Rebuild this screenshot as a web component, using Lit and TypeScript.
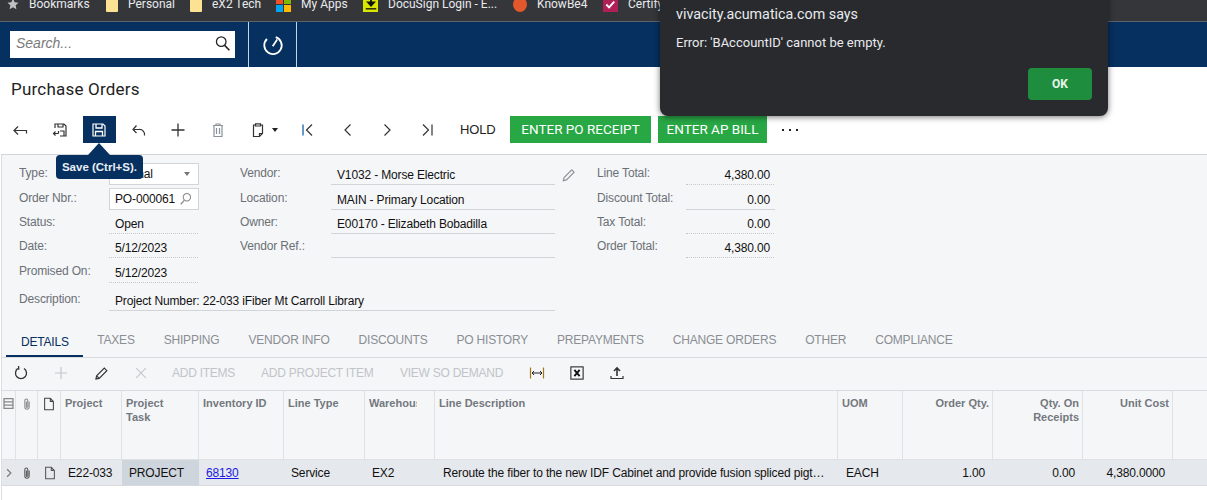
import { LitElement, html, css, svg } from "lit";
import { customElement } from "lit/decorators.js";

const ic = (size: number, body: unknown, cls = "") =>
  html`<svg class="ic ${cls}" width=${size} height=${size} viewBox="0 0 16 16" fill="none" stroke="currentColor" stroke-width="1.2">${body}</svg>`;

const floppy = svg`<path d="M2 2h10l2 2v10H2z"/><path d="M5 2v4h6V2M4.500 14V9.500h7V14" stroke-width="1.300"/>`;
const clip = svg`<path d="M10.500 5v6.500a2.500 2.500 0 0 1-5 0V4a1.700 1.700 0 0 1 3.400 0v7a.8.8 0 0 1-1.600 0V5"/>`;
const doc = svg`<path d="M3 1.500h6.500l3.500 3.500v9.500H3zM9.500 1.500V5H13"/>`;

const tabs = ["DETAILS", "TAXES", "SHIPPING", "VENDOR INFO", "DISCOUNTS", "PO HISTORY", "PREPAYMENTS", "CHANGE ORDERS", "OTHER", "COMPLIANCE"];

@customElement("app-root")
export class AppRoot extends LitElement {
  static styles = css`
    :host { display: block; position: relative; height: 500px; width: 1207px; overflow: hidden; background: #fff; font-family: "Liberation Sans", Arial, sans-serif; font-size: 12px; letter-spacing: -.15px; color: #111; }
    .ic { display: block; flex: none; }

    .bookmarks { height: 21px; background: #35363a; border-bottom: 1px solid #5f6368; overflow: hidden; color: #e8eaed; font-family: Roboto, sans-serif; font-size: 12px; letter-spacing: 0; position: relative; }
    .bm-row { display: flex; align-items: center; height: 14px; margin-top: -3px; padding-left: 7px; white-space: nowrap; }
    .bm { display: flex; align-items: center; gap: 10px; }
    .bm-1 { width: 99px; } .bm-2 { width: 84px; } .bm-3 { width: 86px; } .bm-4 { width: 87px; } .bm-5 { width: 150px; } .bm-6 { width: 90px; }
    .folder { width: 12px; height: 15px; background: #fde293; border-radius: 1px; }
    .ms { display: grid; grid-template-columns: 7px 7px; gap: 1px; width: 15px; }
    .ms i { height: 7px; display: block; }
    .ds { width: 15px; height: 15px; background: #d8e600; color: #111; display: flex; justify-content: center; }
    .kb { width: 14px; height: 15px; border-radius: 50%; background: #e2572b; }
    .cert { width: 15px; height: 15px; background: #b01f58; color: #fff; }

    .nav { height: 45px; background: #05305f; display: flex; align-items: center; }
    .search { width: 225px; height: 27px; margin-left: 10px; background: #fff; display: flex; align-items: center; justify-content: space-between; padding: 0 4px 3px 6px; box-sizing: border-box; color: #7a7a7a; font-style: italic; font-size: 14px; letter-spacing: 0; }
    .search .ic { color: #222; }
    .clock { align-self: stretch; margin-left: 13px; width: 47px; border-left: 1px solid #c5d2e0; border-right: 1px solid #c5d2e0; display: flex; align-items: center; justify-content: center; color: #fff; }

    .title { height: 49px; padding: 0 0 5px 11px; display: flex; align-items: center; font-family: Roboto, sans-serif; font-size: 17px; letter-spacing: .2px; color: #222; box-sizing: border-box; }

    .toolbar { height: 27px; display: flex; align-items: center; gap: 6.6px; padding-left: 3.500px; color: #333; }
    .tb { width: 33px; height: 27px; display: flex; align-items: center; justify-content: center; flex: none; }
    .tb.active { background: #05305f; color: #fff; }
    .tb.muted { color: #8a929b; }
    .tb.wide { width: 44px; gap: 6px; justify-content: flex-start; padding-left: 9px; box-sizing: border-box; }
    .caret { width: 0; height: 0; border-left: 3.500px solid transparent; border-right: 3.500px solid transparent; border-top: 4px solid #222; }
    .txt { height: 27px; display: flex; align-items: center; white-space: nowrap; }
    .hold { margin-left: 10px; width: 43.4px; color: #222; font-size: 13px; }
    .green { background: #28a745; color: #fff; justify-content: center; font-family: Roboto, sans-serif; font-size: 13.500px; letter-spacing: 0; box-sizing: border-box; padding-bottom: 2px; }
    .g1 { width: 141px; } .g2 { width: 109px; margin-left: 0.400px; }
    .dots { margin-left: 8px; width: 16px; display: flex; justify-content: space-between; }
    .dots i { width: 2px; height: 2px; background: #222; display: block; }

    .form { margin-top: 11px; margin-left: 1px; height: 171px; box-sizing: border-box; background: #f5f6f8; border-top: 1px solid #d3d5d8; border-left: 1px solid #dcdee1; padding: 8px 0 0 17px; display: grid; grid-template-columns: 90px 90px 41px 91px 224px 42px 89px 89px; grid-template-rows: 22px 25px 24px 24px 25px 28px; }
    .lbl { color: #6b7076; align-self: end; padding-bottom: 5px; white-space: nowrap; }
    .val { align-self: end; height: 21px; box-sizing: border-box; padding: 1px 6px 0; display: flex; align-items: center; white-space: nowrap; color: #111; }
    .solid { border-bottom: 1px solid #d2d4d7; }
    .dot { border-bottom: 1px dotted #c6c8cb; margin-right: 1px; }
    .r { justify-content: flex-end; padding-right: 5px; }
    .dot.r { padding-right: 4px; }
    .box { align-self: end; height: 22px; background: #fff; border: 1px solid #d2d4d7; box-sizing: border-box; display: flex; align-items: center; justify-content: space-between; padding: 0 5px 0 5px; color: #111; }
    .tri { width: 0; height: 0; border-left: 3.500px solid transparent; border-right: 3.500px solid transparent; border-top: 4px solid #777; margin-right: 3px; }
    .pencil { color: #8d9094; padding: 5px 0 0 6px; }
    .span4 { grid-column: span 4; }
    .box .ic { color: #888; }

    .body { margin-left: 1px; background: #f5f6f8; border-left: 1px solid #dcdee1; }
    .tabs { height: 32px; padding-left: 4px; display: flex; align-items: stretch; border-bottom: 1px solid #d9dbde; letter-spacing: -.2px; }
    .tab { padding: 0 14.500px 1px; display: flex; align-items: center; color: #8a8e94; white-space: nowrap; height: 31px; box-sizing: border-box; }
    .tab.on { color: #05305f; border-bottom: 2px solid #05305f; height: 32px; padding: 3px 14px 0 15px; }

    .gridbar { height: 33px; display: flex; align-items: center; color: #333; border-bottom: 1px solid #d9dbde; box-sizing: border-box; padding-bottom: 2px; }
    .gb { width: 40px; display: flex; justify-content: center; flex: none; }
    .gb.off { color: #c3c6ca; }
    .gt { color: #c1c4c8; white-space: nowrap; letter-spacing: -.25px; }
    .gt1 { margin-left: 11px; width: 89px; } .gt2 { width: 139px; } .gt3 { width: 117px; }
    .gb0 { margin-left: -1px; }

    .grid { display: grid; grid-template-columns: 14px 22px 23px 61px 77px 85px 81px 70px 403px 65px 90px 90px 90px 34px; }
    .h { height: 69px; box-sizing: border-box; border-right: 1px solid #dfe1e4; border-bottom: 1px solid #dfe1e4; padding: 5px 4px 0; font-size: 11px; line-height: 14px; font-weight: 700; letter-spacing: 0; color: #73787e; overflow: hidden; white-space: nowrap; }
    .h.rt { text-align: right; padding-right: 3px; }
    .h.ico { padding: 6px 0 0; color: #888; display: flex; justify-content: center; }
    .h.dark { color: #444; }
    .h.last { border-right: none; }
    .clipw { display: block; width: 48px; overflow: hidden; }
    .c { height: 26px; box-sizing: border-box; background: #e5e8ec; border-bottom: 1px solid #d7d9dc; display: flex; align-items: center; padding: 0 7px; white-space: nowrap; overflow: hidden; color: #111; }
    .c.rt { justify-content: flex-end; padding-right: 8px; }
    .c.ico { padding: 0; justify-content: center; color: #555; }
    .c.chev { color: #777; }
    .c.sel { background: #cfd5dd; }
    .c.p8 { padding-left: 8px; }
    .c.desc { padding-left: 8px; padding-right: 12px; }
    .c a { color: #1a1ae0; text-decoration: underline; }
    .ell { overflow: hidden; text-overflow: ellipsis; display: block; width: 100%; }
    .rest { height: 15px; margin-left: 1px; border-left: 1px solid #dcdee1; background: #fff; }

    .tooltip { position: absolute; left: 56px; top: 155px; width: 87px; height: 24px; border-radius: 4px; background: #05305f; color: #e9eef5; font-size: 11.500px; font-weight: 700; letter-spacing: 0; display: flex; align-items: center; justify-content: center; white-space: nowrap; }
    .tooltip::before { content: ""; position: absolute; left: 32px; top: -12px; border-left: 11px solid transparent; border-right: 11px solid transparent; border-bottom: 12px solid #05305f; }

    .dialog { position: absolute; left: 660px; top: -10px; width: 448px; height: 126px; box-sizing: border-box; background: #292a2d; border-radius: 8px; box-shadow: 0 1px 6px rgba(0,0,0,.55); color: #e8eaed; font-family: Roboto, sans-serif; letter-spacing: 0; padding: 15px 16px 16px; display: flex; flex-direction: column; }
    .d-title { font-size: 14.300px; line-height: 18px; }
    .d-msg { font-size: 13px; line-height: 16px; margin-top: 12px; }
    .d-foot { display: flex; justify-content: flex-end; margin-top: 17px; }
    .ok { width: 64px; height: 32px; background: #1e8e3e; border-radius: 4px; color: #e8f5ec; font-weight: 700; font-size: 12px; display: flex; align-items: center; justify-content: center; }
  `;

  private field(cls: string, text: string) {
    return html`<div class="val ${cls}">${text}</div>`;
  }

  render() {
    const lbl = (t: string) => html`<div class="lbl">${t}</div>`;
    const sp = html`<div></div>`;
    const search = ic(14, svg`<circle cx="9" cy="6" r="4.200"/><path d="M6 9.500l-4 4.500" stroke-width="1.400"/>`);
    return html`
      <div class="bookmarks">
        <div class="bm-row">
          <div class="bm bm-1">${ic(12, svg`<path d="M8 .8l2.200 4.800 5.200.6-3.900 3.500 1.100 5.200L8 12.300 3.400 14.900l1.100-5.200L.6 6.200l5.200-.6z" fill="#bdc1c6" stroke="none"/>`)}<span>Bookmarks</span></div>
          <div class="bm bm-2"><div class="folder"></div><span>Personal</span></div>
          <div class="bm bm-3"><div class="folder"></div><span>eX2 Tech</span></div>
          <div class="bm bm-4"><div class="ms"><i style="background:#f25022"></i><i style="background:#7fba00"></i><i style="background:#00a4ef"></i><i style="background:#ffb900"></i></div><span>My Apps</span></div>
          <div class="bm bm-5"><div class="ds">${ic(14, svg`<path d="M8 1v8M4.500 6L8 10l3.500-4z" stroke-width="2" fill="#111"/><path d="M2 13.500h12" stroke-width="1.500"/>`)}</div><span>DocuSign Login - E...</span></div>
          <div class="bm bm-6"><div class="kb"></div><span>KnowBe4</span></div>
          <div class="bm"><div class="cert">${ic(15, svg`<path d="M3.500 8l3 3 5.500-6" stroke-width="2"/>`)}</div><span>Certify</span></div>
        </div>
      </div>

      <div class="nav">
        <div class="search"><span>Search...</span>${ic(17, svg`<circle cx="6.800" cy="6.300" r="4.500"/><path d="M10 9.800l4.500 4.500" stroke-width="1.500"/>`)}</div>
        <div class="clock">${ic(24, svg`<path d="M9.800 2.700A5.800 5.800 0 1 1 4 4" stroke-width="1.200"/><path d="M7.800 8.800L10.800 4.300" stroke-width="1.200"/>`)}</div>
      </div>

      <div class="title">Purchase Orders</div>

      <div class="toolbar">
        <div class="tb">${ic(16, svg`<path d="M15 8.500H2M6 4.500L2 8.500 6 12.500M14.500 8.500v3" />`)}</div>
        <div class="tb">${ic(16, svg`<path d="M3 6V2h9l2 2v10H8M6 2v3h5V2M1.500 11.500H6.500M3.500 9.500l-2 2 2 2M6.500 11.500V9M8 9h4v5"/>`)}</div>
        <div class="tb active">${ic(16, floppy)}</div>
        <div class="tb">${ic(16, svg`<path d="M5.500 3.500L2 7.500l3.500 3.500M2 7.500h6a5 5 0 0 1 5.500 6" />`)}</div>
        <div class="tb">${ic(16, svg`<path d="M8 1.500v13M1.500 8h13" stroke-width="1.300"/>`)}</div>
        <div class="tb muted">${ic(16, svg`<path d="M3 3.500h10M6 3.500V2h4v1.500M4 3.500V14.500h8V3.500M6.500 6v6M9.500 6v6"/>`)}</div>
        <div class="tb wide">${ic(16, svg`<path d="M5.500 3H3.500v11.500h6l3-3V3h-2M5.500 1.800h5V4h-5zM9.500 14.500v-3h3"/>`)}<div class="caret"></div></div>
        <div class="tb">${ic(16, svg`<path d="M3 2.500v11" stroke="#2b6cb0" stroke-width="1.400"/><path d="M12 2.500L6.500 8l5.500 5.500" />`)}</div>
        <div class="tb">${ic(16, svg`<path d="M10.500 2.500L5 8l5.500 5.500"/>`)}</div>
        <div class="tb">${ic(16, svg`<path d="M5.500 2.500L11 8l-5.500 5.500"/>`)}</div>
        <div class="tb">${ic(16, svg`<path d="M4 2.500L9.500 8 4 13.500M13 2.500v11"/>`)}</div>
        <div class="txt hold">HOLD</div>
        <div class="txt green g1">ENTER PO RECEIPT</div>
        <div class="txt green g2">ENTER AP BILL</div>
        <div class="dots"><i></i><i></i><i></i></div>
      </div>

      <div class="form">
        ${lbl("Type:")}<div class="box"><span>Normal</span><div class="tri"></div></div>${sp}
        ${lbl("Vendor:")}${this.field("solid", "V1032 - Morse Electric")}
        <div class="pencil">${ic(15, svg`<path d="M2.500 13.500l.8-3.300L11.500 2l2.500 2.500-8.200 8.200z"/>`)}</div>
        ${lbl("Line Total:")}${this.field("dot r", "4,380.00")}

        ${lbl("Order Nbr.:")}<div class="box"><span>PO-000061</span>${search}</div>${sp}
        ${lbl("Location:")}${this.field("solid", "MAIN - Primary Location")}${sp}
        ${lbl("Discount Total:")}${this.field("solid r", "0.00")}

        ${lbl("Status:")}${this.field("dot", "Open")}${sp}
        ${lbl("Owner:")}${this.field("solid", "E00170 - Elizabeth Bobadilla")}${sp}
        ${lbl("Tax Total:")}${this.field("dot r", "0.00")}

        ${lbl("Date:")}${this.field("dot", "5/12/2023")}${sp}
        ${lbl("Vendor Ref.:")}${this.field("solid", "")}${sp}
        ${lbl("Order Total:")}${this.field("dot r", "4,380.00")}

        ${lbl("Promised On:")}${this.field("dot", "5/12/2023")}${sp}${sp}${sp}${sp}${sp}${sp}

        ${lbl("Description:")}<div class="val solid span4">Project Number: 22-033 iFiber Mt Carroll Library</div>
      </div>

      <div class="body">
        <div class="tabs">${tabs.map((t, i) => html`<div class="tab ${i === 0 ? "on" : ""}">${t}</div>`)}</div>
        <div class="gridbar">
          <div class="gb gb0">${ic(16, svg`<path d="M5 3.500A5.500 5.500 0 1 0 11 3.500M5.500 1l.3 3-3 .3" stroke-width="1.300"/>`)}</div>
          <div class="gb off">${ic(16, svg`<path d="M8 2v12M2 8h12"/>`)}</div>
          <div class="gb">${ic(15, svg`<path d="M2 14l.8-3.500L11 2.300l2.700 2.700-8.200 8.200zM2.800 10.500l2.700 2.700" />`)}</div>
          <div class="gb off">${ic(14, svg`<path d="M2.500 2.500l11 11M13.500 2.500l-11 11"/>`)}</div>
          <div class="gt gt1">ADD ITEMS</div>
          <div class="gt gt2">ADD PROJECT ITEM</div>
          <div class="gt gt3">VIEW SO DEMAND</div>
          <div class="gb">${ic(16, svg`<path d="M1.500 2.500v11M14.500 2.500v11" stroke="#a8761a"/><path d="M3 8h10M5 6l-2 2 2 2M11 6l2 2-2 2" stroke="#222" stroke-width="1"/>`)}</div>
          <div class="gb">${ic(14, svg`<rect x="1" y="1" width="14" height="14" stroke="#222"/><path d="M5 4.500l6 7M11 4.500l-6 7" stroke="#111" stroke-width="2.200"/>`)}</div>
          <div class="gb">${ic(16, svg`<path d="M8 11V3M5 6l3-3 3 3" stroke-width="1.600"/><path d="M2 11v2.500h12V11" stroke-width="1.200"/>`)}</div>
        </div>

        <div class="grid">
          <div class="h ico">${ic(13, svg`<path d="M2.500 2h11v12h-11zM2.500 6h11M2.500 10h11" stroke-width="1.600"/>`)}</div>
          <div class="h ico">${ic(14, clip)}</div>
          <div class="h ico dark">${ic(14, doc)}</div>
          <div class="h">Project</div>
          <div class="h">Project<br />Task</div>
          <div class="h">Inventory ID</div>
          <div class="h">Line Type</div>
          <div class="h"><span class="clipw">Warehouse</span></div>
          <div class="h">Line Description</div>
          <div class="h">UOM</div>
          <div class="h rt">Order Qty.</div>
          <div class="h rt">Qty. On<br />Receipts</div>
          <div class="h rt">Unit Cost</div>
          <div class="h last"></div>

          <div class="c ico chev">${ic(10, svg`<path d="M5 2l6 6-6 6" stroke-width="1.800"/>`)}</div>
          <div class="c ico">${ic(14, clip)}</div>
          <div class="c ico">${ic(14, doc)}</div>
          <div class="c">E22-033</div>
          <div class="c sel">PROJECT</div>
          <div class="c"><a>68130</a></div>
          <div class="c">Service</div>
          <div class="c">EX2</div>
          <div class="c desc"><span class="ell">Reroute the fiber to the new IDF Cabinet and provide fusion spliced pigtails and terminate at both ends</span></div>
          <div class="c p8">EACH</div>
          <div class="c rt">1.00</div>
          <div class="c rt">0.00</div>
          <div class="c rt">4,380.0000</div>
          <div class="c"></div>
        </div>
      </div>
      <div class="rest"></div>

      <div class="tooltip">Save (Ctrl+S).</div>

      <div class="dialog">
        <div class="d-title">vivacity.acumatica.com says</div>
        <div class="d-msg">Error: 'BAccountID' cannot be empty.</div>
        <div class="d-foot"><div class="ok">OK</div></div>
      </div>
    `;
  }
}
